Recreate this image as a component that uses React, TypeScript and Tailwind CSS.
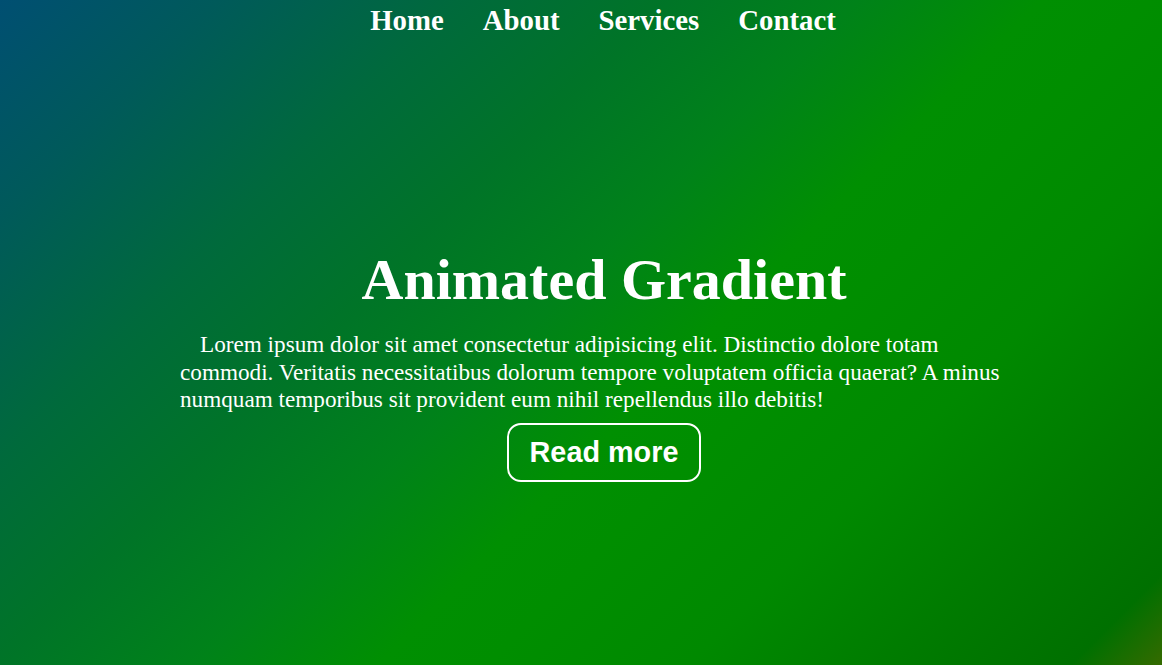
export default function App() {
  const links = ["Home", "About", "Services", "Contact"];

  return (
    <div className="relative h-[665px] w-full overflow-hidden bg-[linear-gradient(135deg,#004f72_0%,#005a5a_12%,#006a3c_25%,#007428_36%,#008219_47%,#008f02_57%,#008e00_63%,#008900_74%,#007a00_86%,#007000_95%,#356a00_100%)] font-['Liberation_Serif',serif] text-white">
      {/* Nav */}
      <nav className="ml-[180px] flex w-[848px] justify-center pr-[2px] pt-[4px]">
        <ul className="flex gap-[39px]">
          {links.map((l) => (
            <li key={l}>
              <a href="#" className="text-[28.8px] font-bold leading-[33px]">
                {l}
              </a>
            </li>
          ))}
        </ul>
      </nav>

      {/* Hero */}
      <section className="ml-[180px] mt-[211px] flex w-[848px] flex-col items-center">
        <h1 className="text-[58px] font-bold leading-[64px]">Animated Gradient</h1>
        <p className="mt-[19px] w-full indent-[20px] text-[23.2px] leading-[27.5px]">
          Lorem ipsum dolor sit amet consectetur adipisicing elit. Distinctio dolore totam commodi. Veritatis
          necessitatibus dolorum tempore voluptatem officia quaerat? A minus numquam temporibus sit provident eum
          nihil repellendus illo debitis!
        </p>
        <button className="mt-[9px] rounded-[14px] border-2 border-white px-[20.5px] py-[11px] font-['Liberation_Sans',sans-serif] text-[28.8px] font-bold leading-[33px] text-white">
          Read more
        </button>
      </section>
    </div>
  );
}
